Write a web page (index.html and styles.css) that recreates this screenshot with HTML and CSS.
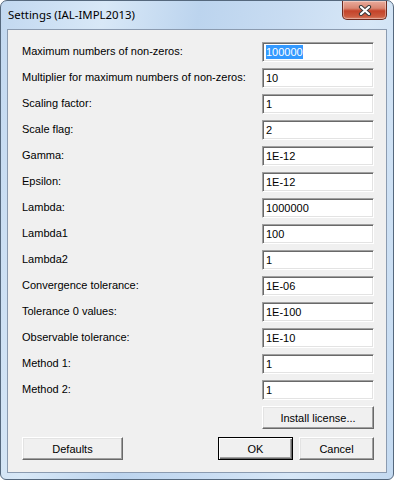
FILE: index.html
```html
<!DOCTYPE html>
<html lang="en">
  <head>
    <meta charset="UTF-8" />
    <title>Settings (IAL-IMPL2013)</title>
    <link rel="stylesheet" href="styles.css">
  </head>
  <body>
    <div class="window">
      <div class="titlebar">
        <span class="title">Settings (IAL-IMPL2013)</span>
        <div class="close">
          <svg width="14" height="11" viewBox="0 0 14 11">
            <path d="M3 2 L11 9 M11 2 L3 9" stroke="#3a3a3a" stroke-width="4.2" stroke-linecap="round" />
            <path d="M3 2 L11 9 M11 2 L3 9" stroke="#ffffff" stroke-width="2.2" stroke-linecap="round" />
          </svg>
        </div>
      </div>

      <div class="client">
        <div class="form">
          <label>Maximum numbers of non-zeros:</label>
          <div class="field"><span class="sel">100000</span></div>
          <label>Multiplier for maximum numbers of non-zeros:</label>
          <div class="field">10</div>
          <label>Scaling factor:</label>
          <div class="field">1</div>
          <label>Scale flag:</label>
          <div class="field">2</div>
          <label>Gamma:</label>
          <div class="field">1E-12</div>
          <label>Epsilon:</label>
          <div class="field">1E-12</div>
          <label>Lambda:</label>
          <div class="field">1000000</div>
          <label>Lambda1</label>
          <div class="field">100</div>
          <label>Lambda2</label>
          <div class="field">1</div>
          <label>Convergence tolerance:</label>
          <div class="field">1E-06</div>
          <label>Tolerance 0 values:</label>
          <div class="field">1E-100</div>
          <label>Observable tolerance:</label>
          <div class="field">1E-10</div>
          <label>Method 1:</label>
          <div class="field">1</div>
          <label>Method 2:</label>
          <div class="field">1</div>
        </div>

        <div class="license-row">
          <button class="btn wide">Install license...</button>
        </div>

        <div class="buttons">
          <button class="btn defaults">Defaults</button>
          <div class="right">
            <button class="btn default-btn">OK</button>
            <button class="btn">Cancel</button>
          </div>
        </div>
      </div>
    </div>
  </body>
</html>
```

FILE: styles.css
```css
body {
  margin: 0;
  font-family: "Liberation Sans", Arial, sans-serif;
  font-size: 11px;
  color: #000;
}
.window {
  width: 394px;
  height: 480px;
  box-sizing: border-box;
  border: 1px solid #55687d;
  border-radius: 7px 7px 6px 6px;
  background: linear-gradient(100deg, #c2d8f0 0%, #d8e8f7 22%, #bcd4ee 42%, #c8dcf2 60%, #d7e7f7 78%, #c4daf1 100%);
  display: flex;
  flex-direction: column;
  overflow: hidden;
}
.titlebar {
  height: 28px;
  flex: none;
  display: flex;
  justify-content: space-between;
  align-items: flex-start;
  padding-left: 7px;
  padding-right: 6px;
}
.title {
  font-family: "Noto Sans", "Open Sans", sans-serif;
  font-size: 11.4px;
  line-height: 16px;
  margin-top: 6px;
  color: #000;
}
.close {
  width: 43px;
  height: 18px;
  border: 1px solid #6b2a20;
  border-top: none;
  border-radius: 0 0 5px 5px;
  background: linear-gradient(#e9ab9c 0%, #d98672 40%, #c4432a 55%, #cb5a3e 85%, #d9826a 100%);
  box-shadow: inset 0 0 0 1px rgba(255, 255, 255, 0.35);
  display: flex;
  align-items: center;
  justify-content: center;
}
.close svg {
  display: block;
}
.client {
  flex: 1;
  margin: 0 6px 6px 6px;
  border: 1px solid #8b9bb0;
  background: #f0f0f0;
  padding: 12px 12px 12px 14px;
  display: flex;
  flex-direction: column;
}
.form {
  display: grid;
  grid-template-columns: 1fr 112px;
  grid-auto-rows: 20px;
  row-gap: 6px;
}
.form label {
  align-self: center;
  padding-bottom: 3px;
  white-space: nowrap;
}
.field {
  box-sizing: border-box;
  height: 20px;
  background: #fff;
  border: 1px solid;
  border-color: #a0a0a0 #ffffff #ffffff #a0a0a0;
  box-shadow: inset 1px 1px #696969, inset -1px -1px #e3e3e3;
  padding: 2px 3px 0 3px;
  line-height: 15px;
  white-space: nowrap;
}
.sel {
  background: #3399ff;
  color: #fff;
  display: inline-block;
  line-height: 14px;
}
.btn {
  box-sizing: border-box;
  height: 23px;
  font-family: "Liberation Sans", Arial, sans-serif;
  font-size: 11px;
  color: #000;
  background: #f0f0f0;
  border: 1px solid;
  border-color: #ffffff #696969 #696969 #ffffff;
  box-shadow: inset -1px -1px #a0a0a0, inset 1px 1px #e3e3e3;
  padding: 0;
  margin: 0;
}
.license-row {
  display: flex;
  justify-content: flex-end;
  margin-top: 6px;
}
.wide {
  width: 112px;
}
.buttons {
  display: flex;
  justify-content: space-between;
  margin-top: 8px;
}
.defaults {
  width: 101px;
}
.right {
  display: flex;
  gap: 6px;
}
.right .btn {
  width: 75px;
}
.default-btn {
  border: 1px solid #000;
  box-shadow: inset 1px 1px #ffffff, inset -1px -1px #696969, inset -2px -2px #a0a0a0;
}
```
